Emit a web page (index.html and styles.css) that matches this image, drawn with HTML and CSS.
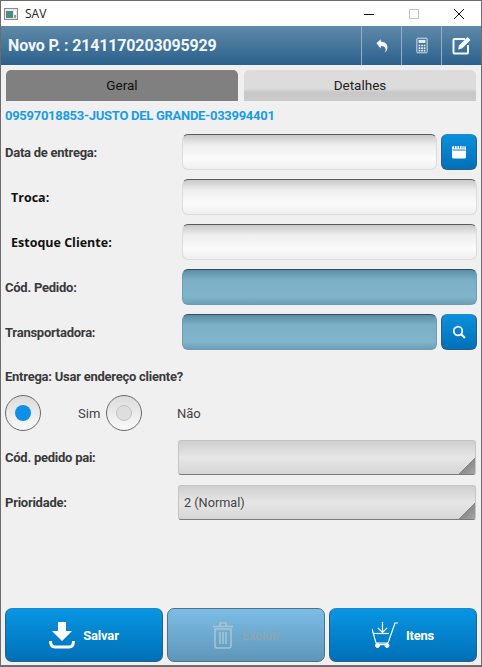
FILE: index.html
```html
<!DOCTYPE html>
<html lang="en">
<head>
    <meta charset="UTF-8">
    <meta name="viewport" content="width=device-width, initial-scale=1.0">
    <title>SAV</title>
    <link rel="stylesheet" href="styles.css">
</head>
<body>

    <div class="window">
        <div class="titlebar">
            <svg class="app-icon" width="14" height="12" viewBox="0 0 14 12">
                <rect x="0.5" y="0.5" width="13" height="11" fill="#e8e8e8" stroke="#8a8a8a"/>
                <rect x="2" y="3" width="7" height="7" fill="#4f8a8b"/>
                <rect x="10" y="3" width="2" height="3" fill="#fff"/>
                <rect x="10" y="7" width="2" height="3" fill="#9a9a9a"/>
            </svg>
            <span class="title">SAV</span>
            <div class="win-controls">
                <svg width="12" height="12" viewBox="0 0 12 12"><path d="M1 6.500h10" stroke="#111" fill="none"/></svg>
                <svg width="12" height="12" viewBox="0 0 12 12"><rect x="1.500" y="1.500" width="9" height="9" stroke="#c4c4c4" fill="none"/></svg>
                <svg width="12" height="12" viewBox="0 0 12 12"><path d="M1 1l10 10M11 1L1 11" stroke="#111" fill="none"/></svg>
            </div>
        </div>

        <div class="header">
            <div class="header-title">Novo P. : 2141170203095929</div>
            <div class="header-btn">
                <svg width="16" height="18" viewBox="0 0 20 20"><path d="M3 6.500l5.500-5v3.200c5 0 8.300 2.600 8.300 7 0 3-1.300 5.300-3.300 6.800 1-2 1.300-3.800.8-5.500-.6-2-2.800-3-5.800-3v3z" fill="#f4f8fb"/></svg>
            </div>
            <div class="header-btn">
                <svg width="12" height="17" viewBox="0 0 14 18">
                    <rect x="1" y="0.500" width="12" height="17" rx="1" fill="none" stroke="#e8eef3"/>
                    <rect x="3" y="2.500" width="8" height="3.500" fill="#e8eef3"/>
                    <path d="M3 8h2v2H3zM6 8h2v2H6zM9 8h2v2H9zM3 11h2v2H3zM6 11h2v2H6zM9 11h2v2H9zM3 14h2v2H3zM6 14h2v2H6zM9 14h2v2H9z" fill="#e8eef3"/>
                </svg>
            </div>
            <div class="header-btn">
                <svg width="20" height="19" viewBox="0 0 20 19">
                    <path d="M13 3H2.500A1 1 0 0 0 1.500 4v12.500a1 1 0 0 0 1 1H15a1 1 0 0 0 1-1V9" fill="none" stroke="#f4f8fb" stroke-width="2"/>
                    <path d="M7 9.500L15.500 1l3 3-8.500 8.500-4 1z" fill="#f4f8fb"/>
                </svg>
            </div>
        </div>

        <div class="tabs">
            <div class="tab tab-active">Geral</div>
            <div class="tab">Detalhes</div>
        </div>

        <div class="customer">09597018853-JUSTO DEL GRANDE-033994401</div>

        <div class="form">
            <div class="row">
                <span class="label">Data de entrega:</span>
                <div class="field-wrap">
                    <div class="field"></div>
                    <div class="icon-btn">
                        <svg width="16" height="14" viewBox="0 0 16 14">
                            <path d="M1 2.500a1.500 1.500 0 0 1 1.500-1.500h11A1.500 1.500 0 0 1 15 2.500V12a1.500 1.500 0 0 1-1.500 1.500h-11A1.500 1.500 0 0 1 1 12z" fill="#fff"/>
                            <path d="M1.500 5h13" stroke="#0b78bf"/>
                            <path d="M3.500 1v2.500M6 1v2.500M8.500 1v2.500M11 1v2.500M13 1v2.500" stroke="#0b78bf" stroke-width=".8"/>
                        </svg>
                    </div>
                </div>
            </div>
            <div class="row">
                <span class="label label-alt">Troca:</span>
                <div class="field"></div>
            </div>
            <div class="row">
                <span class="label label-alt">Estoque Cliente:</span>
                <div class="field"></div>
            </div>
            <div class="row">
                <span class="label">Cód. Pedido:</span>
                <div class="field field-blue"></div>
            </div>
            <div class="row">
                <span class="label">Transportadora:</span>
                <div class="field-wrap">
                    <div class="field field-blue"></div>
                    <div class="icon-btn">
                        <svg width="14" height="14" viewBox="0 0 14 14">
                            <circle cx="6" cy="6" r="4.300" fill="none" stroke="#fff" stroke-width="1.700"/>
                            <path d="M9.200 9.200l3.800 3.800" stroke="#fff" stroke-width="2"/>
                        </svg>
                    </div>
                </div>
            </div>
        </div>

        <div class="question">Entrega: Usar endereço cliente?</div>

        <div class="radios">
            <div class="radio radio-on"></div>
            <span class="radio-text text-sim">Sim</span>
            <div class="radio"></div>
            <span class="radio-text text-nao">Não</span>
        </div>

        <div class="spinners">
            <div class="row-spin">
                <span class="label">Cód. pedido pai:</span>
                <div class="spinner"></div>
            </div>
            <div class="row-spin">
                <span class="label">Prioridade:</span>
                <div class="spinner">2 (Normal)</div>
            </div>
        </div>

        <div class="actions">
            <div class="action">
                <svg width="26" height="27" viewBox="0 0 26 27">
                    <path d="M9 0h8v9h6L13 19 3 9h6z" fill="#fff"/>
                    <path d="M1.500 19c0 4 1.500 6 4.500 6h14c3 0 4.500-2 4.500-6" fill="none" stroke="#fff" stroke-width="3"/>
                </svg>
                <span>Salvar</span>
            </div>
            <div class="action action-off">
                <svg width="22" height="28" viewBox="0 0 22 28" fill="none" stroke="#a9c3d3" stroke-width="1.500">
                    <path d="M1 5.500h20M8 5V2h6v3M3 8v17a2 2 0 0 0 2 2h12a2 2 0 0 0 2-2V8H3zM8 11v12M11 11v12M14 11v12"/>
                </svg>
                <span>Excluir</span>
            </div>
            <div class="action">
                <svg width="26" height="26" viewBox="0 0 26 26" fill="none" stroke="#fff">
                    <path d="M0 7l4 14h12L23 1h3" stroke-width="1.200"/>
                    <path d="M2 11.500h15" stroke-width="1.200"/>
                    <path d="M10.500 0v10M6 6l4.500 4.500L15 6" stroke-width="1.200"/>
                    <path d="M4 22.500h12" stroke-width="1.500"/>
                    <circle cx="5.500" cy="23.500" r="2" fill="#fff"/>
                    <circle cx="15" cy="23.500" r="2" fill="#fff"/>
                </svg>
                <span>Itens</span>
            </div>
        </div>
    </div>

</body>
</html>
```

FILE: styles.css
```css
body {
    margin: 0;
    font-family: Roboto, sans-serif;
    background-color: #f0f0f0;
    color: #333;
}

.window {
    width: 482px;
    height: 667px;
    box-sizing: border-box;
    border: 1px solid #6c6c6c;
    border-bottom-width: 2px;
    display: flex;
    flex-direction: column;
    overflow: hidden;
}

.titlebar {
    height: 25px;
    background-color: #fff;
    display: flex;
    align-items: center;
    padding-left: 3px;
    flex-shrink: 0;
}

.app-icon {
    margin-right: 7px;
}

.title {
    font-family: "Open Sans", sans-serif;
    font-size: 12px;
    color: #222;
}

.win-controls {
    margin-left: auto;
    display: flex;
    gap: 33px;
    padding-right: 16px;
}

.header {
    height: 39px;
    flex-shrink: 0;
    display: flex;
    align-items: stretch;
    background: linear-gradient(#5f89a8, #2b618d);
    color: #f2f6f9;
}

.header-title {
    flex: 1;
    padding-left: 7px;
    font-size: 16px;
    font-weight: 700;
    line-height: 39px;
    letter-spacing: -0.15px;
}

.header-btn {
    width: 39px;
    border-left: 1px solid #8db0c8;
    display: flex;
    align-items: center;
    justify-content: center;
}

.tabs {
    display: flex;
    gap: 6px;
    padding: 5px 5px 0;
    height: 31px;
    flex-shrink: 0;
}

.tab {
    flex: 1;
    border-radius: 5px 5px 0 0;
    background: linear-gradient(#dcdcdc 60%, #c8c8c8 72%, #cacaca);
    color: #222;
    font-size: 13.500px;
    text-align: center;
    line-height: 31px;
}

.tab-active {
    background: #808080;
    color: #111;
}

.customer {
    padding: 7px 4px 0;
    height: 25px;
    box-sizing: border-box;
    font-size: 13px;
    font-weight: 700;
    color: #1b9ce2;
    letter-spacing: -0.28px;
    white-space: nowrap;
    flex-shrink: 0;
}

.form {
    padding: 8px 4px 0;
    display: flex;
    flex-direction: column;
    gap: 9px;
}

.row {
    display: grid;
    grid-template-columns: 177px 1fr;
    height: 36px;
    align-items: center;
}

.label {
    font-size: 13px;
    font-weight: 700;
    color: #3a3a3a;
    letter-spacing: -0.25px;
}

.label-alt {
    font-family: "Open Sans", sans-serif;
    font-size: 12.500px;
    color: #111;
    padding-left: 6px;
    letter-spacing: 0;
}

.field-wrap {
    display: flex;
    gap: 4px;
    height: 36px;
}

.field {
    flex: 1;
    height: 36px;
    box-sizing: border-box;
    border-radius: 6px;
    border: 1px solid #dcdcdc;
    border-top: 1px solid #5a5a5a;
    background: linear-gradient(#c9c9c9, #eeeeee 30%, #fbfbfb 70%, #efefef);
}

.field-blue {
    border: 1px solid #6f9db2;
    border-top: 1px solid #2f4d5c;
    background: linear-gradient(#5b8ea5, #7cb0c7 30%, #7fb4ca 80%, #6e9fb5);
}

.icon-btn {
    width: 36px;
    height: 36px;
    box-sizing: border-box;
    border-radius: 6px;
    border: 1px solid #2f5f80;
    border-top-color: #1a8ad0;
    background: linear-gradient(#0b90dc, #0070b8);
    display: flex;
    align-items: center;
    justify-content: center;
}

.question {
    margin-top: 19px;
    padding-left: 4px;
    font-size: 13px;
    font-weight: 700;
    color: #3a3a3a;
    letter-spacing: -0.25px;
    line-height: 16px;
}

.radios {
    margin-top: 10px;
    padding-left: 4px;
    display: flex;
    align-items: center;
    height: 36px;
}

.radio {
    width: 36px;
    height: 36px;
    box-sizing: border-box;
    border-radius: 50%;
    border: 1px solid #6a6a6a;
    background: linear-gradient(#dcdcdc, #fafafa);
    display: flex;
    align-items: center;
    justify-content: center;
}

.radio::after {
    content: "";
    width: 14px;
    height: 14px;
    border-radius: 50%;
    background: #dedede;
    border: 1px solid #c2c2c2;
}

.radio-on::after {
    width: 16px;
    height: 16px;
    border: none;
    background: #0f8fe6;
}

.radio-text {
    font-size: 13px;
    color: #444;
}

.text-sim {
    margin-left: 37px;
    width: 28px;
}

.text-nao {
    margin-left: 35px;
}

.spinners {
    margin-top: 9px;
    padding: 0 5px 0 4px;
    display: flex;
    flex-direction: column;
    gap: 10px;
}

.row-spin {
    display: grid;
    grid-template-columns: 173px 1fr;
    align-items: center;
}

.spinner {
    position: relative;
    height: 35px;
    box-sizing: border-box;
    padding-left: 5px;
    border-radius: 3px;
    border: 1px solid #c4c4c4;
    border-bottom: 1px solid #7a7a7a;
    background: linear-gradient(#cfcfcf, #e6e6e6 50%, #d6d6d6);
    font-size: 12.700px;
    line-height: 33px;
    color: #444;
}

.spinner::after {
    content: "";
    position: absolute;
    right: 0;
    bottom: 0;
    width: 16px;
    height: 16px;
    background: linear-gradient(135deg, transparent 50%, #8a8a8a 50%, #a8a8a8);
}

.actions {
    margin-top: auto;
    margin-bottom: 3px;
    padding: 0 4px;
    display: grid;
    grid-template-columns: 158px 158px 148px;
    gap: 4px;
}

.action {
    height: 54px;
    box-sizing: border-box;
    border-radius: 7px;
    border: 1px solid #2f5f80;
    border-top-color: #1a8ad0;
    background: linear-gradient(#0895e2, #0070b8);
    color: #fff;
    font-size: 13px;
    font-weight: 700;
    letter-spacing: -0.2px;
    display: flex;
    align-items: center;
    justify-content: center;
    gap: 8px;
}

.action-off {
    background: linear-gradient(#7cbde6, #5f96b8);
    color: #8aa5b5;
    border-color: #4d7287;
}
```
